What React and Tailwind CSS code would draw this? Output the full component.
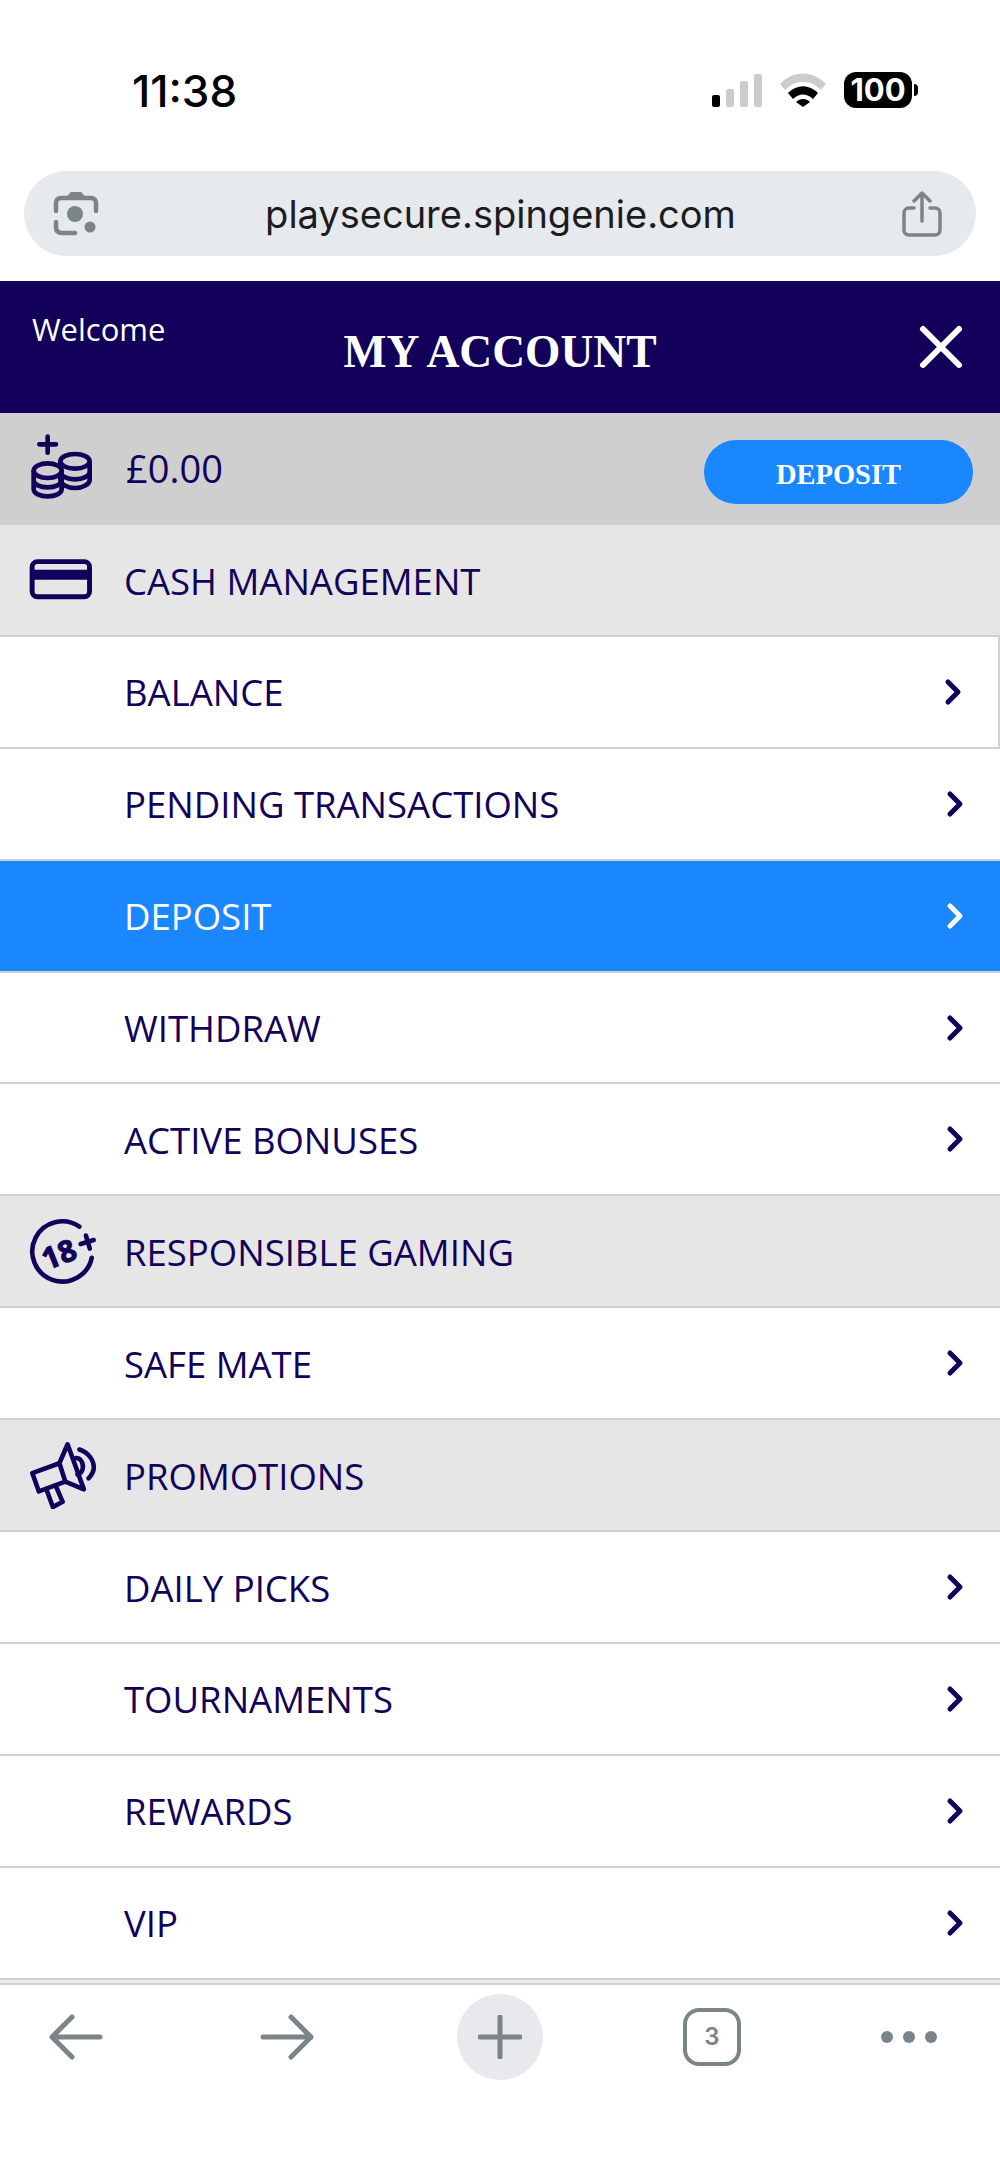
import { ChevronRight, X } from 'lucide-react';

const NAVY = '#12005a';

const sections = [
    {
        title: 'CASH MANAGEMENT',
        icon: CardIcon,
        items: ['BALANCE', 'PENDING TRANSACTIONS', 'DEPOSIT', 'WITHDRAW', 'ACTIVE BONUSES'],
    },
    { title: 'RESPONSIBLE GAMING', icon: AgeIcon, items: ['SAFE MATE'] },
    {
        title: 'PROMOTIONS',
        icon: MegaphoneIcon,
        items: ['DAILY PICKS', 'TOURNAMENTS', 'REWARDS', 'VIP'],
    },
];

function CoinsIcon() {
    return (
        <svg viewBox="90 100 195 195" className="-mt-[6px] h-[65px] w-[65px]" fill="none" stroke={NAVY} strokeWidth="14" strokeLinecap="round">
            <path d="M143 108v48M118 131h50" />
            <ellipse cx="225" cy="182" rx="44" ry="22" />
            <path d="M181 186v52c0 12 20 24 44 24s44-12 44-24v-52M181 214c0 12 20 22 44 22s44-10 44-22" />
            <ellipse cx="143" cy="210" rx="42" ry="22" fill="#cfcfcf" />
            <path d="M101 212v54c0 12 19 21 42 21s42-9 42-21v-54M101 239c0 12 19 21 42 21s42-9 42-21" />
        </svg>
    );
}

function CardIcon() {
    return (
        <svg viewBox="90 478 192 125" className="h-[41px] w-[64px]" fill="none" stroke={NAVY} strokeWidth="15">
            <rect x="98" y="486" width="175" height="107" rx="16" />
            <path d="M98 526h175" strokeWidth="30" />
        </svg>
    );
}

function AgeIcon() {
    return (
        <svg viewBox="82 112 208 202" className="h-[67px] w-[68px]" fill="none" stroke={NAVY} strokeWidth="14" strokeLinecap="round">
            <path d="M236 137A92 92 0 1 0 274 232" />
            <path d="M256 164l12 40M240 190l40-12" />
            <text x="174" y="254" transform="rotate(-22 174 222)" textAnchor="middle" fontFamily="'Open Sans', sans-serif" fontWeight="700" fontSize="92" fill={NAVY} stroke={NAVY} strokeWidth="3">18</text>
        </svg>
    );
}

function MegaphoneIcon() {
    return (
        <svg viewBox="82 780 208 208" className="h-[68px] w-[68px]" fill="none" stroke={NAVY} strokeWidth="14" strokeLinejoin="round" strokeLinecap="round">
            <path d="M92 878l83-30 18 56-81 30z" />
            <path d="M175 848l25-58 50 138-57-24" />
            <path d="M136 930l19 52 30-16-20-46" />
            <path d="M226 832c14 0 24 16 20 34-2 8-8 14-16 16" />
            <path d="M236 806c30 10 46 36 44 58-1 12-8 22-16 30" />
        </svg>
    );
}

function StatusBar() {
    return (
        <div className="flex h-[117px] items-end justify-between pl-[132px] pr-[82px] pb-[1px]">
            <span className="text-[44px] leading-[50px] font-medium text-black font-['Inter',sans-serif]">11:38</span>
            <div className="flex items-center gap-[18px] pb-[8px]">
                <div className="flex items-end gap-[6px]">
                    <span className="h-[12px] w-[8px] rounded-[2px] bg-black" />
                    <span className="h-[18px] w-[8px] rounded-[2px] bg-[#cccccc]" />
                    <span className="h-[26px] w-[8px] rounded-[2px] bg-[#cccccc]" />
                    <span className="h-[33px] w-[8px] rounded-[2px] bg-[#cccccc]" />
                </div>
                <svg viewBox="0 0 46 34" className="h-[34px] w-[46px]">
                    <path d="M0 11C13-3 33-3 46 11l-5 6C30 6 16 6 5 17z" fill="#cccccc" />
                    <path d="M8 20c9-9 21-9 30 0l-5 6c-6-6-14-6-20 0z" fill="#000" />
                    <path d="M16 29c4-4 10-4 14 0l-7 5z" fill="#000" />
                </svg>
                <div className="flex items-center gap-[2px]">
                    <div className="flex h-[36px] w-[68px] items-center justify-center rounded-[12px] bg-black text-[31px] font-bold text-white font-['Inter',sans-serif]">100</div>
                    <span className="h-[12px] w-[4px] rounded-r-full bg-black" />
                </div>
            </div>
        </div>
    );
}

function UrlBar() {
    return (
        <div className="mx-[24px] mt-[54px] flex h-[85px] items-center justify-between rounded-[42px] bg-[#e6eaed] pl-[29px] pr-[34px]">
            <svg viewBox="0 0 46 46" className="h-[46px] w-[46px]" fill="none" stroke="#7b8589" strokeWidth="4.5" strokeLinecap="round" strokeLinejoin="round">
                <path d="M14 7l4-5h10l4 5z" fill="#7b8589" strokeWidth="2" />
                <path d="M3 20v-8c0-3 2-5 5-5h30c3 0 5 2 5 5v8M3 31v5c0 4 2 6 6 6h13" />
                <circle cx="22" cy="23" r="8" fill="#7b8589" stroke="none" />
                <circle cx="37" cy="36" r="5.5" fill="#7b8589" stroke="none" />
            </svg>
            <span className="text-[38px] leading-none text-[#1c1c1e] font-['Inter',sans-serif]">playsecure.spingenie.com</span>
            <svg viewBox="0 0 40 46" className="h-[46px] w-[40px]" fill="none" stroke="#7b8589" strokeWidth="3.5" strokeLinecap="round" strokeLinejoin="round">
                <path d="M20 30V3M12 10l8-8 8 8" />
                <path d="M12 17H7c-3 0-5 2-5 5v17c0 3 2 5 5 5h26c3 0 5-2 5-5V22c0-3-2-5-5-5h-5" />
            </svg>
        </div>
    );
}

function Header() {
    return (
        <div className="grid h-[132px] grid-cols-[1fr_auto_1fr] bg-[#12005a] px-[32px] font-['Open_Sans',sans-serif] text-white">
            <span className="pt-[26px] text-[31px] leading-[44px]">Welcome</span>
            <span className="pt-[46px] text-[45.5px] leading-[50px] font-bold font-['Liberation_Serif',serif]">MY ACCOUNT</span>
            <div className="flex justify-end pt-[30px]">
                <X className="-mr-[9px] h-[72px] w-[72px]" strokeWidth={2} />
            </div>
        </div>
    );
}

function BalanceRow() {
    return (
        <div className="flex h-[112px] items-center bg-[#cfcfcf] pl-[30px] pr-[27px]">
            <CoinsIcon />
            <span className="ml-[31px] pb-[2px] text-[38px] text-[#12005a] font-['Open_Sans',sans-serif]">£0.00</span>
            <button className="ml-auto mt-[5px] h-[64px] w-[269px] rounded-full bg-[#1a87ff] pt-[8px] text-[28.5px] font-bold text-white font-['Liberation_Serif',serif]">DEPOSIT</button>
        </div>
    );
}

function SectionRow({ title, icon: Icon }) {
    return (
        <div className="flex h-[111.9px] items-center border-b-2 border-[#d0d0d0] bg-[#e6e6e6] text-[#12005a]">
            <div className="flex w-[124px] justify-start pl-[29px]">
                <Icon />
            </div>
            <span className="pt-[2px] text-[36.5px]">{title}</span>
        </div>
    );
}

function MenuRow({ label }) {
    const active = label === 'DEPOSIT';
    const focused = label === 'BALANCE';
    return (
        <div className={`flex h-[111.9px] items-center justify-between border-b-2 border-[#d0d0d0] pl-[124px] pr-[25px] ${active ? 'bg-[#1a87ff] text-white' : 'bg-white text-[#12005a]'} ${focused ? 'border-r-2' : ''}`}>
            <span className="pt-[2px] text-[36.5px]">{label}</span>
            <ChevronRight className="h-[40px] w-[40px]" strokeWidth={3} />
        </div>
    );
}

function BottomBar() {
    return (
        <div className="flex-1 bg-white">
            <div className="h-[5px] border-b-2 border-[#d0d0d0] bg-[#ececec]" />
            <div className="mt-[9px] flex h-[86px] items-center gap-[140px] pl-[48px]">
                <svg viewBox="0 0 56 46" className="h-[46px] w-[56px]" fill="none" stroke="#7b8589" strokeWidth="5" strokeLinecap="round" strokeLinejoin="round">
                    <path d="M52 23H4M24 3L4 23l20 20" />
                </svg>
                <svg viewBox="0 0 56 46" className="ml-[15px] h-[46px] w-[56px]" fill="none" stroke="#7b8589" strokeWidth="5" strokeLinecap="round" strokeLinejoin="round">
                    <path d="M4 23h48M32 3l20 20-20 20" />
                </svg>
                <div className="ml-[2px] flex h-[86px] w-[86px] items-center justify-center rounded-full bg-[#e8e9ed]">
                    <svg viewBox="0 0 44 44" className="h-[44px] w-[44px]" stroke="#7b8589" strokeWidth="5" strokeLinecap="round">
                        <path d="M22 2v40M2 22h40" />
                    </svg>
                </div>
                <div className="flex h-[58px] w-[58px] items-center justify-center rounded-[16px] border-[4px] border-[#7b8589] text-[24px] font-semibold text-[#7b8589] font-['Inter',sans-serif]">3</div>
                <div className="flex gap-[10px]">
                    <span className="h-[12px] w-[12px] rounded-full bg-[#7b8589]" />
                    <span className="h-[12px] w-[12px] rounded-full bg-[#7b8589]" />
                    <span className="h-[12px] w-[12px] rounded-full bg-[#7b8589]" />
                </div>
            </div>
        </div>
    );
}

export default function App() {
    return (
        <div className="flex h-[2171px] w-[1000px] flex-col overflow-hidden bg-white font-['Open_Sans',sans-serif]">
            <StatusBar />
            <UrlBar />
            <div className="h-[25px]" />
            <Header />
            <BalanceRow />
            {sections.map((section) => (
                <div key={section.title}>
                    <SectionRow title={section.title} icon={section.icon} />
                    {section.items.map((item) => (
                        <MenuRow key={item} label={item} />
                    ))}
                </div>
            ))}
            <BottomBar />
        </div>
    );
}
